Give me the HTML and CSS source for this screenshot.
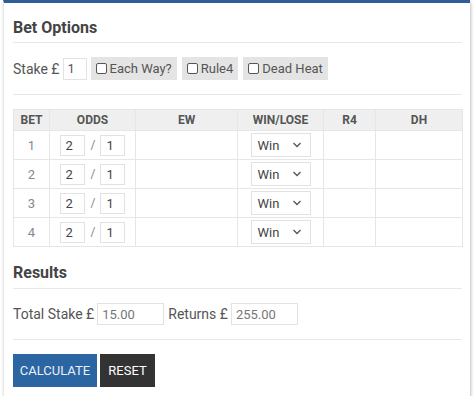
FILE: index.html
```html
<!DOCTYPE html>
<html>
<head>
<meta charset="utf-8">
<link rel="stylesheet" href="styles.css">
</head>
<body>
<div class="card">
  <h2 class="title">Bet Options</h2>
  <hr class="rule">
  <div class="opts">
    <span class="lbl">Stake £</span>
    <input class="inp stake" type="text" value="1">
    <label class="chk"><span class="box"></span>Each Way?</label>
    <label class="chk"><span class="box"></span>Rule4</label>
    <label class="chk"><span class="box"></span>Dead Heat</label>
  </div>
  <hr class="rule r2">
  <table class="bets">
    <colgroup>
      <col class="c1"><col class="c2"><col class="c3"><col class="c4"><col class="c5"><col class="c6">
    </colgroup>
    <thead>
      <tr><th>BET</th><th>ODDS</th><th>EW</th><th>WIN/LOSE</th><th>R4</th><th>DH</th></tr>
    </thead>
    <tbody>
      <tr><td class="n">1</td><td><div class="odds"><input class="inp o" value="2"><span class="sl">/</span><input class="inp o" value="1"></div></td><td></td><td><div class="sel"><span>Win</span><svg width="10" height="6" viewBox="0 0 10 6"><path d="M1.5 1 L5 4.5 L8.5 1" fill="none" stroke="#555" stroke-width="1.3"/></svg></div></td><td></td><td></td></tr>
      <tr><td class="n">2</td><td><div class="odds"><input class="inp o" value="2"><span class="sl">/</span><input class="inp o" value="1"></div></td><td></td><td><div class="sel"><span>Win</span><svg width="10" height="6" viewBox="0 0 10 6"><path d="M1.5 1 L5 4.5 L8.5 1" fill="none" stroke="#555" stroke-width="1.3"/></svg></div></td><td></td><td></td></tr>
      <tr><td class="n">3</td><td><div class="odds"><input class="inp o" value="2"><span class="sl">/</span><input class="inp o" value="1"></div></td><td></td><td><div class="sel"><span>Win</span><svg width="10" height="6" viewBox="0 0 10 6"><path d="M1.5 1 L5 4.5 L8.5 1" fill="none" stroke="#555" stroke-width="1.3"/></svg></div></td><td></td><td></td></tr>
      <tr><td class="n">4</td><td><div class="odds"><input class="inp o" value="2"><span class="sl">/</span><input class="inp o" value="1"></div></td><td></td><td><div class="sel"><span>Win</span><svg width="10" height="6" viewBox="0 0 10 6"><path d="M1.5 1 L5 4.5 L8.5 1" fill="none" stroke="#555" stroke-width="1.3"/></svg></div></td><td></td><td></td></tr>
    </tbody>
  </table>
  <h2 class="title t2">Results</h2>
  <hr class="rule r3">
  <div class="res">
    <span class="lbl">Total Stake £</span>
    <input class="inp out" value="15.00">
    <span class="lbl l2">Returns £</span>
    <input class="inp out" value="255.00">
  </div>
  <hr class="rule r4">
  <div class="btns">
    <button class="btn calc">CALCULATE</button>
    <button class="btn reset">RESET</button>
  </div>
</div>
</body>
</html>
```
FILE: styles.css
```css
* { box-sizing: border-box; }
body {
  margin: 0;
  background: #fff;
  font-family: Roboto, "Liberation Sans", sans-serif;
  color: #555;
}
.card {
  margin-left: 3px;
  width: 467px;
  border-top: 3px solid #2f5e96;
  border-left: 1px solid #e6e6e6;
  box-shadow: 1px 2px 3px rgba(0,0,0,0.25);
  padding: 0 8px 9px 9px;
  background: #fff;
}
.title {
  margin: 15px 0 0 0;
  font-size: 16px;
  line-height: 20px;
  font-weight: 700;
  color: #444;
}
.t2 { margin-top: 16px; }
.rule {
  border: 0;
  border-top: 1px solid #e8e8e8;
  margin: 4px 0 0 0;
  height: 0;
}
.r2 { margin-top: 14px; }
.r3 { margin-top: 5px; }
.r4 { margin-top: 14px; }
.opts {
  display: flex;
  align-items: center;
  margin-top: 14px;
  height: 23px;
}
.lbl {
  font-size: 14px;
  color: #555;
}
.inp {
  font-family: Roboto, "Liberation Sans", sans-serif;
  border: 1px solid #e2e2e2;
  background: #fff;
  color: #555;
  font-size: 13px;
  padding: 0 0 0 4px;
  outline: none;
}
.stake {
  width: 24px;
  height: 22px;
  margin-left: 3px;
}
.chk {
  display: flex;
  align-items: center;
  height: 23px;
  background: #e4e4e4;
  font-size: 13px;
  color: #555;
  padding: 0 5px 0 5px;
  margin-left: 5px;
}
.chk:first-of-type { margin-left: 4px; }
.box {
  width: 11px;
  height: 11px;
  border: 1px solid #555;
  border-radius: 2px;
  background: #fff;
  margin-right: 3px;
}
.bets {
  margin-top: 14px;
  border-collapse: collapse;
  table-layout: fixed;
  width: 449px;
}
.c1 { width: 36px; }
.c2 { width: 86px; }
.c3 { width: 102px; }
.c4 { width: 86px; }
.c5 { width: 52px; }
.c6 { width: 87px; }
.bets th, .bets td {
  border: 1px solid #e6e6e6;
  padding: 0;
  text-align: center;
}
.bets th {
  background: #efefef;
  font-size: 12px;
  font-weight: 700;
  color: #555;
  height: 21px;
}
.bets td {
  height: 29px;
  font-size: 13px;
  color: #888;
}
.odds {
  display: flex;
  align-items: center;
  justify-content: center;
}
.o {
  width: 25px;
  height: 21px;
  padding-left: 5px;
  color: #444;
}
.sl {
  font-size: 12px;
  color: #888;
  margin: 0 5px 0 6px;
}
.sel {
  margin: 0 auto;
  width: 60px;
  height: 24px;
  border: 1px solid #e2e2e2;
  display: flex;
  align-items: center;
  justify-content: space-between;
  padding: 0 8px 0 6px;
  font-size: 13px;
  color: #444;
}
.res {
  display: flex;
  align-items: center;
  margin-top: 14px;
  height: 22px;
}
.out {
  height: 22px;
  width: 67px;
  margin-left: 3px;
  font-size: 13px;
  color: #777;
}
.l2 { margin-left: 4px; }
.btns {
  display: flex;
  gap: 3px;
  margin-top: 14px;
}
.btn {
  font-family: Roboto, "Liberation Sans", sans-serif;
  border: 0;
  height: 33px;
  font-size: 13px;
  font-weight: 400;
  color: #fff;
  padding: 0;
}
.calc { width: 84px; background: #2c66a2; color: #e8f0f8; }
.reset { width: 55px; background: #333; }
```
